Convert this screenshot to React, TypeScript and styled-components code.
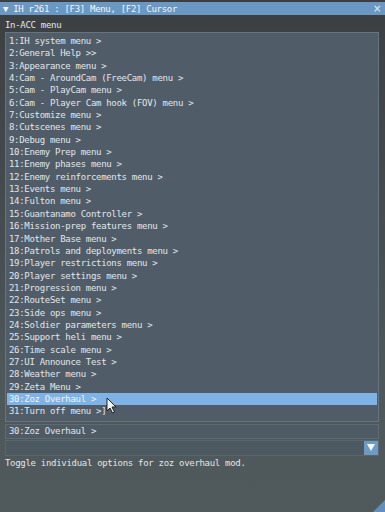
import * as React from 'react';
import styled, { createGlobalStyle } from 'styled-components';

const GlobalStyle = createGlobalStyle`
  html, body {
    margin: 0;
    padding: 0;
    background: #3b3e40;
  }
`;

const menuItems = [
  '1:IH system menu >',
  '2:General Help >>',
  '3:Appearance menu >',
  '4:Cam - AroundCam (FreeCam) menu >',
  '5:Cam - PlayCam menu >',
  '6:Cam - Player Cam hook (FOV) menu >',
  '7:Customize menu >',
  '8:Cutscenes menu >',
  '9:Debug menu >',
  '10:Enemy Prep menu >',
  '11:Enemy phases menu >',
  '12:Enemy reinforcements menu >',
  '13:Events menu >',
  '14:Fulton menu >',
  '15:Guantanamo Controller >',
  '16:Mission-prep features menu >',
  '17:Mother Base menu >',
  '18:Patrols and deployments menu >',
  '19:Player restrictions menu >',
  '20:Player settings menu >',
  '21:Progression menu >',
  '22:RouteSet menu >',
  '23:Side ops menu >',
  '24:Soldier parameters menu >',
  '25:Support heli menu >',
  '26:Time scale menu >',
  '27:UI Announce Test >',
  '28:Weather menu >',
  '29:Zeta Menu >',
  '30:Zoz Overhaul >',
  '31:Turn off menu >]',
];

const Window = styled.div`
  position: relative;
  width: 385px;
  height: 512px;
  overflow: hidden;
  display: flex;
  flex-direction: column;
  background: linear-gradient(180deg, #3c3f41 0%, #454b4e 40%, #4e585b 75%, #505a5c 100%);
  font-family: 'DejaVu Sans Mono', 'Liberation Mono', monospace;
  font-size: 9px;
  letter-spacing: -0.3px;
  color: #e2e6e9;
`;

const TitleBar = styled.div`
  height: 13px;
  margin-top: 2px;
  display: flex;
  align-items: center;
  justify-content: space-between;
  padding: 0 3px 0 3px;
  background: #6b98c2;
  color: #f2f6fa;
  white-space: pre;
`;

const CloseMark = styled.span`
  font-family: 'DejaVu Sans', sans-serif;
  font-size: 10px;
  color: #e8f0f8;
  margin-right: 1px;
`;

const Content = styled.div`
  display: flex;
  flex-direction: column;
  padding: 0 6px 0 5px;
`;

const Label = styled.div`
  height: 17px;
  line-height: 17px;
  padding-top: 2px;
  box-sizing: border-box;
`;

const ListBox = styled.div`
  border: 1px solid #68747d;
  background: #505d69;
  padding: 2px 1px 3px 1px;
  display: flex;
  flex-direction: column;
`;

const Row = styled.div<{ $selected?: boolean }>`
  height: 12.35px;
  line-height: 12.35px;
  padding-left: 2px;
  white-space: pre;
  background: ${({ $selected }) => ($selected ? '#80b3e5' : 'transparent')};
  color: ${({ $selected }) => ($selected ? '#eef4fa' : '#e2e6e9')};
`;

const Field = styled.div`
  margin-top: 2px;
  height: 13px;
  line-height: 13px;
  border: 1px solid #5f6b73;
  background: #4e5b65;
  padding-left: 3px;
  white-space: pre;
`;

const Combo = styled.div`
  margin-top: 1px;
  height: 14px;
  display: flex;
  border: 1px solid #5a666c;
  background: #4d5961;
`;

const ComboValue = styled.div`
  flex: 1;
`;

const ComboButton = styled.div`
  width: 14px;
  display: flex;
  align-items: center;
  justify-content: center;
  background: #6d9bc6;
`;

const Description = styled.div`
  margin-top: 1px;
  height: 13px;
  line-height: 13px;
  white-space: pre;
`;

const ResizeGrip = styled.svg`
  position: absolute;
  right: 0;
  bottom: 0;
`;

const Cursor = styled.svg`
  position: absolute;
  left: 106px;
  top: 397px;
`;

export default function App() {
  return (
    <>
      <GlobalStyle />
      <Window>
        <TitleBar>
          <span>{'▼ IH r261 : [F3] Menu, [F2] Cursor'}</span>
          <CloseMark>×</CloseMark>
        </TitleBar>
        <Content>
          <Label>In-ACC menu</Label>
          <ListBox>
            {menuItems.map((item) => (
              <Row key={item} $selected={item.startsWith('30:')}>{item}</Row>
            ))}
          </ListBox>
          <Field>30:Zoz Overhaul &gt;</Field>
          <Combo>
            <ComboValue />
            <ComboButton>
              <svg width="8" height="7" viewBox="0 0 8 7">
                <path d="M0 0 L8 0 L4 7 Z" fill="#f4f8fc" />
              </svg>
            </ComboButton>
          </Combo>
          <Description>Toggle individual options for zoz overhaul mod.</Description>
        </Content>
        <Cursor width="12" height="17" viewBox="0 0 12 17">
          <path d="M1 1 L1 14 L4 11 L6.5 16 L8.5 15 L6 10 L10 10 Z" fill="#f4f4f4" stroke="#202020" strokeWidth="1" />
        </Cursor>
        <ResizeGrip width="12" height="12" viewBox="0 0 12 12">
          <path d="M12 0 L12 12 L0 12 Z" fill="#5f8fbd" />
        </ResizeGrip>
      </Window>
    </>
  );
}
